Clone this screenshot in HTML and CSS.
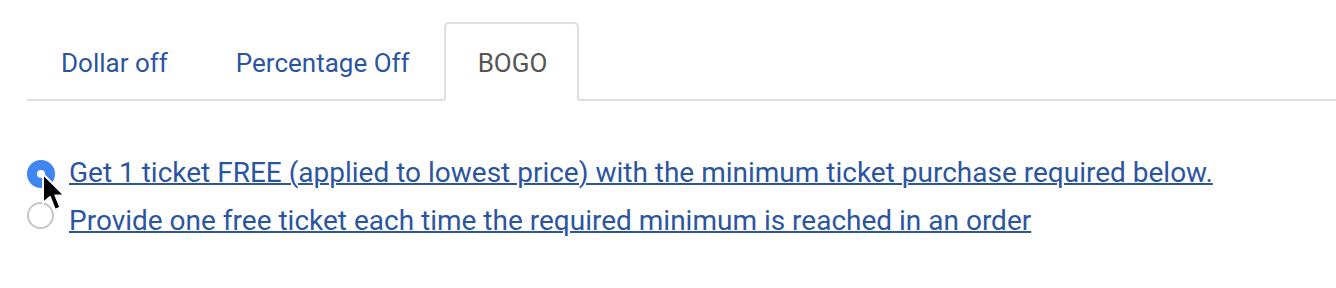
FILE: index.html
```html
<!DOCTYPE html>
<html lang="en">
<head>
<meta charset="utf-8">
<title>BOGO</title>
<link rel="stylesheet" href="styles.css">
</head>
<body>
<div class="page">
  <ul class="tabs">
    <li class="tab"><a href="#">Dollar off</a></li>
    <li class="tab"><a href="#">Percentage Off</a></li>
    <li class="tab active"><a href="#">BOGO</a></li>
  </ul>
  <div class="options">
    <label class="option">
      <span class="radio checked"></span>
      <a href="#" class="opt-text">Get 1 ticket FREE (applied to lowest price) with the minimum ticket purchase required below.</a>
    </label>
    <label class="option">
      <span class="radio"></span>
      <a href="#" class="opt-text">Provide one free ticket each time the required minimum is reached in an order</a>
    </label>
    <svg class="cursor" width="28" height="42" viewBox="0 0 28 42">
      <path d="M2 2 L2 31 L9 25 L14 38 L19.5 35.5 L14.5 23.5 L23.5 23.5 Z" fill="#000" stroke="#fff" stroke-width="2" stroke-linejoin="round"/>
    </svg>
  </div>
</div>
</body>
</html>
```
FILE: styles.css
```css
html, body {
  margin: 0;
  padding: 0;
  background: #fff;
}
body {
  font-family: Roboto, "Liberation Sans", Arial, sans-serif;
}
.page {
  padding: 22px 0 0 27px;
}
.tabs {
  list-style: none;
  margin: 0;
  padding: 0;
  display: flex;
  border-bottom: 2px solid #dedede;
}
.tab {
  margin-bottom: -2px;
}
.tab a {
  display: block;
  padding: 21px 32px 18px;
  border: 2px solid transparent;
  border-radius: 5px 5px 0 0;
  font-size: 26px;
  line-height: 36px;
  color: #2b559f;
  text-decoration: none;
}
.tab.active a {
  color: #555;
  border-color: #dedede;
  border-bottom-color: #fff;
  background: #fff;
  padding-right: 30px;
}
.options {
  position: relative;
  padding-top: 55px;
  display: flex;
  flex-direction: column;
}
.option {
  display: flex;
  align-items: flex-start;
  gap: 15px;
  height: 48px;
}
.radio {
  box-sizing: border-box;
  width: 27px;
  height: 27px;
  border-radius: 50%;
  border: 2px solid #c6c6c6;
  background: #fff;
  flex: none;
  margin-top: -2px;
}
.radio.checked {
  width: 28px;
  height: 28px;
  margin-top: 4px;
  margin-right: -1px;
  border: 10px solid #3f86f2;
  background: #fff;
}
.opt-text {
  font-size: 28px;
  line-height: 34px;
  color: #2b559f;
  text-decoration: underline;
  text-decoration-thickness: 2px;
}
.cursor {
  position: absolute;
  left: 14px;
  top: 71px;
}
```
